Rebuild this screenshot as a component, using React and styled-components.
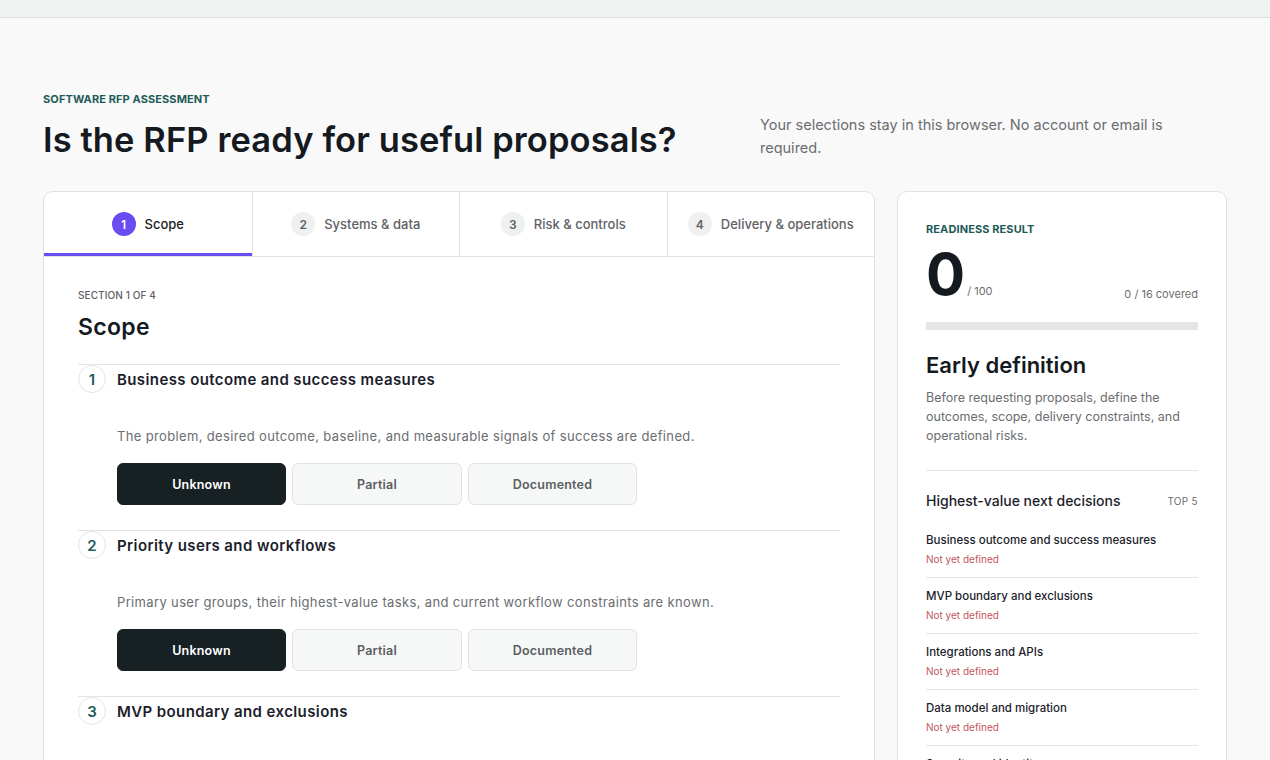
import styled, { createGlobalStyle } from "styled-components"

const GlobalStyle = createGlobalStyle`
	* { box-sizing: border-box; }
	body {
		margin: 0;
		background: #f9f9f9;
		font-family: Inter, "Noto Sans", sans-serif;
		color: #1a1f24;
	}
`

const TopBar = styled.div`
	height: 18px;
	background: #eef2f0;
	border-bottom: 1px solid #dcdfde;
`

const Page = styled.main`
	max-width: 1184px;
	margin: 0 auto;
	padding-top: 74px;
`

const Header = styled.header`
	display: flex;
	justify-content: space-between;
	align-items: flex-end;
	margin-bottom: 29px;
`

const Eyebrow = styled.div`
	font-size: 11px;
	font-weight: 700;
	color: #1e5b59;
	text-transform: uppercase;
	letter-spacing: 0.1px;
`

const Title = styled.h1`
	margin: 12px 0 0;
	font-size: 34.5px;
	line-height: 44px;
	font-weight: 600;
	letter-spacing: 0.1px;
	color: #141a1f;
`

const Note = styled.p`
	flex: 0 0 467px;
	padding-right: 50px;
	margin: 0 0 3px;
	font-size: 14.5px;
	line-height: 23px;
	color: #6b6d70;
`

const Layout = styled.div`
	display: grid;
	grid-template-columns: 832px 330px;
	gap: 22px;
	align-items: start;
`

const Card = styled.section`
	background: #fff;
	border: 1px solid #dfe2e1;
	border-radius: 10px;
	overflow: hidden;
`

const Tabs = styled.nav`
	display: grid;
	grid-template-columns: repeat(4, 1fr);
	border-bottom: 1px solid #e0e3e2;
`

const Tab = styled.div`
	height: 64px;
	display: flex;
	align-items: center;
	justify-content: center;
	gap: 9px;
	font-size: 13px;
	font-weight: 500;
	color: ${(p) => (p.$active ? "#1a1f24" : "#5f6266")};
	border-left: ${(p) => (p.$first ? "none" : "1px solid #e3e5e4")};
	box-shadow: ${(p) => (p.$active ? "inset 0 -3px 0 #6a4cf0" : "none")};
`

const TabNum = styled.span`
	width: 24px;
	height: 24px;
	border-radius: 50%;
	display: inline-flex;
	align-items: center;
	justify-content: center;
	font-size: 12px;
	font-weight: 600;
	background: ${(p) => (p.$active ? "#6a4cf0" : "#eef1f0")};
	color: ${(p) => (p.$active ? "#fff" : "#5f6266")};
`

const Body = styled.div`
	padding: 32px 34px 0;
`

const SectionLabel = styled.div`
	font-size: 10px;
	font-weight: 500;
	color: #5d6064;
	letter-spacing: 0.1px;
`

const SectionTitle = styled.h2`
	margin: 11px 0 22px;
	font-size: 23px;
	line-height: 30px;
	font-weight: 600;
	letter-spacing: 0.3px;
	color: #141a1f;
`

const Question = styled.div`
	border-top: 1px solid #e2e4e3;
	padding-bottom: 25px;
`

const QHead = styled.div`
	display: flex;
	align-items: center;
	gap: 11px;
	height: 28px;
`

const QNum = styled.span`
	width: 28px;
	height: 28px;
	border-radius: 50%;
	border: 1px solid #e2e4e3;
	display: inline-flex;
	align-items: center;
	justify-content: center;
	font-size: 15px;
	font-weight: 600;
	color: #1e5b59;
`

const QTitle = styled.h3`
	margin: 0;
	font-size: 15px;
	font-weight: 600;
	color: #1c1d2b;
	letter-spacing: 0.4px;
`

const QDesc = styled.p`
	margin: 33px 0 17px 39px;
	font-size: 13px;
	line-height: 20px;
	color: #6b6d70;
	letter-spacing: 0.35px;
`

const Options = styled.div`
	display: flex;
	gap: 6px;
	margin-left: 39px;
`

const Option = styled.button`
	width: ${(p) => p.$w}px;
	height: 42px;
	border-radius: 6px;
	font-family: inherit;
	font-size: 12.5px;
	font-weight: 600;
	letter-spacing: 0.2px;
	border: 1px solid ${(p) => (p.$selected ? "#172023" : "#e1e4e3")};
	background: ${(p) => (p.$selected ? "#172023" : "#f6f8f7")};
	color: ${(p) => (p.$selected ? "#fff" : "#5b5e62")};
	cursor: pointer;
`

const Side = styled.aside`
	background: #fff;
	border: 1px solid #dfe2e1;
	border-radius: 10px;
	padding: 30px 28px 0;
`

const ScoreRow = styled.div`
	display: flex;
	align-items: flex-end;
	margin-top: 10px;
	height: 56px;
`

const Score = styled.span`
	font-size: 58px;
	line-height: 56px;
	font-weight: 700;
	color: #141a1f;
	margin-right: 2px;
`

const Small = styled.span`
	font-size: 11px;
	color: #6b6d70;
	margin-bottom: ${(p) => p.$mb || 0}px;
	margin-left: ${(p) => (p.$push ? "auto" : 0)};
`

const Bar = styled.div`
	height: 8px;
	background: #e4e6e5;
	margin-top: 20px;
`

const ResultTitle = styled.h2`
	margin: 20px 0 8px;
	font-size: 22px;
	line-height: 30px;
	font-weight: 600;
	color: #141a1f;
`

const ResultText = styled.p`
	margin: 0;
	font-size: 12.5px;
	line-height: 19px;
	color: #6b6d70;
	padding-bottom: 25px;
	border-bottom: 1px solid #e2e4e3;
`

const DecHead = styled.div`
	display: flex;
	justify-content: space-between;
	align-items: center;
	margin: 21px 0 23px;
`

const DecTitle = styled.h3`
	margin: 0;
	font-size: 14px;
	font-weight: 500;
	color: #1c1d2b;
`

const DecTag = styled.span`
	font-size: 10px;
	color: #6b6d70;
	letter-spacing: 0.3px;
`

const DecItem = styled.div`
	padding-bottom: 11px;
	border-bottom: 1px solid #e2e4e3;
	margin-bottom: 10px;
`

const DecName = styled.div`
	font-size: 11.5px;
	font-weight: 500;
	line-height: 16px;
	color: #1c1d2b;
`

const DecState = styled.div`
	margin-top: 4px;
	font-size: 10px;
	line-height: 14px;
	color: #c2575c;
`

const tabs = ["Scope", "Systems & data", "Risk & controls", "Delivery & operations"]

const questions = [
	{
		title: "Business outcome and success measures",
		desc: "The problem, desired outcome, baseline, and measurable signals of success are defined.",
	},
	{
		title: "Priority users and workflows",
		desc: "Primary user groups, their highest-value tasks, and current workflow constraints are known.",
	},
	{
		title: "MVP boundary and exclusions",
		desc: "What is in the first release, what is deferred, and what is explicitly excluded is agreed.",
	},
]

const options = [
	{ label: "Unknown", w: 169 },
	{ label: "Partial", w: 170 },
	{ label: "Documented", w: 169 },
]

const decisions = [
	"Business outcome and success measures",
	"MVP boundary and exclusions",
	"Integrations and APIs",
	"Data model and migration",
	"Security and identity",
]

function App() {
	return (
		<>
			<GlobalStyle />
			<TopBar />
			<Page>
				<Header>
					<div>
						<Eyebrow>Software RFP assessment</Eyebrow>
						<Title>Is the RFP ready for useful proposals?</Title>
					</div>
					<Note>Your selections stay in this browser. No account or email is required.</Note>
				</Header>
				<Layout>
					<Card>
						<Tabs>
							{tabs.map((t, i) => (
								<Tab key={t} $active={i === 0} $first={i === 0}>
									<TabNum $active={i === 0}>{i + 1}</TabNum>
									{t}
								</Tab>
							))}
						</Tabs>
						<Body>
							<SectionLabel>SECTION 1 OF 4</SectionLabel>
							<SectionTitle>Scope</SectionTitle>
							{questions.map((q, i) => (
								<Question key={q.title}>
									<QHead>
										<QNum>{i + 1}</QNum>
										<QTitle>{q.title}</QTitle>
									</QHead>
									<QDesc>{q.desc}</QDesc>
									<Options>
										{options.map((o) => (
											<Option key={o.label} $w={o.w} $selected={o.label === "Unknown"}>
												{o.label}
											</Option>
										))}
									</Options>
								</Question>
							))}
						</Body>
					</Card>
					<Side>
						<Eyebrow>Readiness result</Eyebrow>
						<ScoreRow>
							<Score>0</Score>
							<Small $mb={4}>/ 100</Small>
							<Small $push $mb={1}>0 / 16 covered</Small>
						</ScoreRow>
						<Bar />
						<ResultTitle>Early definition</ResultTitle>
						<ResultText>
							Before requesting proposals, define the outcomes, scope, delivery constraints, and
							operational risks.
						</ResultText>
						<DecHead>
							<DecTitle>Highest-value next decisions</DecTitle>
							<DecTag>TOP 5</DecTag>
						</DecHead>
						{decisions.map((d) => (
							<DecItem key={d}>
								<DecName>{d}</DecName>
								<DecState>Not yet defined</DecState>
							</DecItem>
						))}
					</Side>
				</Layout>
			</Page>
		</>
	)
}

export default App
